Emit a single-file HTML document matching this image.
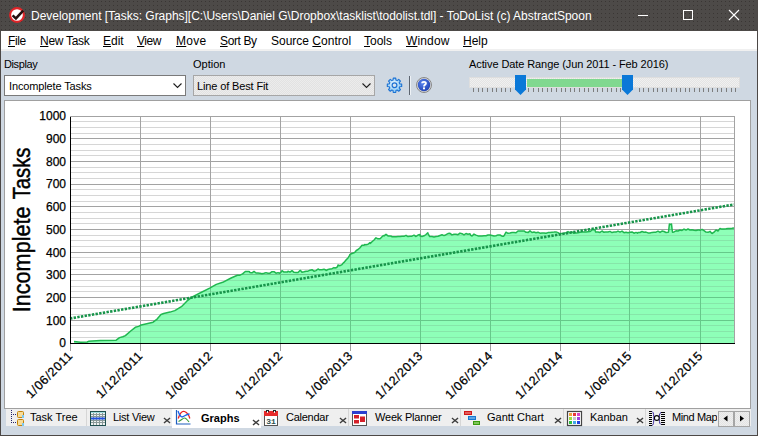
<!DOCTYPE html>
<html><head><meta charset="utf-8">
<style>
*{margin:0;padding:0;box-sizing:border-box}
html,body{width:758px;height:436px;overflow:hidden;background:#cfd8e2;font-family:"Liberation Sans",sans-serif;}
.abs{position:absolute}
#title{left:0;top:0;width:758px;height:31px;background-color:#4d4a48;background-image:radial-gradient(circle at 1.5px 1.5px,#3a3634 0.55px,transparent 0.85px);background-size:4px 4px}
#title .t{position:absolute;left:31px;top:9px;font-size:12px;color:#fff;white-space:nowrap;letter-spacing:-0.02px}
#menu{left:1px;top:31px;width:756px;height:20px;background:#fff;border-bottom:2px solid #f0f0f0}
#menu span{position:absolute;top:3px;font-size:12px;color:#000;white-space:nowrap}
#menu u{text-decoration:underline;text-underline-offset:1px}
.lbl{position:absolute;font-size:11px;color:#000;white-space:nowrap}
.combo{position:absolute;height:21px;border:1px solid #7a7a7a;background:#fff}
.combo .ct{position:absolute;left:3px;top:3px;font-size:11px;white-space:nowrap}
#panel{left:4px;top:100px;width:747px;height:309px;background:#fff;border:1px solid #a0a0a0}
.chart{position:absolute;left:0;top:0}
.mn{stroke:#d6d6d6;stroke-width:1}
.mj{stroke:#a3a3a3;stroke-width:1}
.ing .mn{stroke:#86e6a9}
.ing .mj{stroke:#66c98a}
.tk{stroke:#a0a0a0;stroke-width:1}
.yl text{font-family:"Liberation Sans",sans-serif;font-size:12px;fill:#000;stroke:#000;stroke-width:0.25px}
.dl text{font-family:"Liberation Sans",sans-serif;font-size:12.5px;letter-spacing:0.6px;stroke:#000;stroke-width:0.25px;fill:#000}
.ytitle{font-family:"Liberation Sans",sans-serif;font-size:23px;fill:#000;stroke:#000;stroke-width:0.45px}
#tabs{left:5px;top:409px;width:746px;height:18px}
.tab{position:absolute;top:0;height:18px;background:#ececec}
.tab .tt{position:absolute;top:3px;font-size:12px;white-space:nowrap;color:#000}
.x{position:absolute;font-size:11px}
.tt{position:absolute;top:411px;font-size:11px;white-space:nowrap;color:#000}
.sep{top:409px;width:1px;height:17px;background:#d6d6d6}
.sbtn{top:411px;width:16px;height:16px;background:repeating-conic-gradient(#e4e4e4 0 25%,#eeeeee 0 50%) 0 0/2px 2px;border:1px solid #a6a6a6}
#bl{left:0;top:0;width:1px;height:436px;background:#4c4846}
#br{left:757px;top:0;width:1px;height:436px;background:#4c4846}
#bb{left:0;top:435px;width:758px;height:1px;background:#4c4846}
</style></head><body>
<div id="title" class="abs">
  <svg class="abs" style="left:9px;top:7px" width="16" height="16" viewBox="0 0 16 16">
    <circle cx="8" cy="8" r="6.9" fill="#fff" stroke="#e02428" stroke-width="2.1"/>
    <path d="M3.6 8.4 L6.9 11.4 L14.2 3.6" fill="none" stroke="#231010" stroke-width="2.5"/>
  </svg>
  <div class="t">Development [Tasks: Graphs][C:\Users\Daniel G\Dropbox\tasklist\todolist.tdl] - ToDoList (c) AbstractSpoon</div>
  <svg class="abs" style="left:630px;top:0" width="128" height="31" viewBox="0 0 128 31">
    <line x1="8" y1="15.5" x2="18" y2="15.5" stroke="#fff" stroke-width="1"/>
    <rect x="53.5" y="10.5" width="9" height="9" fill="none" stroke="#fff" stroke-width="1"/>
    <path d="M99 10 L109 20 M109 10 L99 20" stroke="#fff" stroke-width="1.1"/>
  </svg>
</div>
<div id="menu" class="abs">
  <span style="left:7px;letter-spacing:-0.4px"><u>F</u>ile</span>
  <span style="left:39px;letter-spacing:-0.28px"><u>N</u>ew Task</span>
  <span style="left:102px"><u>E</u>dit</span>
  <span style="left:136px;letter-spacing:-0.45px"><u>V</u>iew</span>
  <span style="left:175px;letter-spacing:0.3px"><u>M</u>ove</span>
  <span style="left:219px;letter-spacing:-0.38px"><u>S</u>ort By</span>
  <span style="left:270px">Source <u>C</u>ontrol</span>
  <span style="left:363px"><u>T</u>ools</span>
  <span style="left:405px;letter-spacing:0.15px"><u>W</u>indow</span>
  <span style="left:462px"><u>H</u>elp</span>
</div>
<div class="lbl" style="left:4px;top:58px;letter-spacing:-0.4px">Display</div>
<div class="lbl" style="left:193px;top:58px">Option</div>
<div class="lbl" style="left:469px;top:58px;letter-spacing:-0.09px">Active Date Range (Jun 2011 - Feb 2016)</div>
<div class="combo" style="left:4px;top:75px;width:182px"><div class="ct" style="left:4px;top:4px;letter-spacing:-0.13px">Incomplete Tasks</div>
  <svg class="abs" style="left:168px;top:7px" width="10" height="6"><path d="M0.5 0.5 L4.5 4.5 L8.5 0.5" fill="none" stroke="#1e1e1e" stroke-width="1.1"/></svg></div>
<div class="combo" style="left:193px;top:75px;width:182px;background:repeating-conic-gradient(#e2e2e2 0 25%,#ececec 0 50%) 0 0/2px 2px;border-color:#a6a6a6"><div class="ct" style="top:4px;letter-spacing:-0.13px">Line of Best Fit</div>
  <svg class="abs" style="left:168px;top:7px" width="10" height="6"><path d="M0.5 0.5 L4.5 4.5 L8.5 0.5" fill="none" stroke="#1e1e1e" stroke-width="1.1"/></svg></div>
<!-- gear -->
<svg class="abs" style="left:384px;top:75px" width="21" height="21" viewBox="0 0 21 21">
  <defs><radialGradient id="gg" cx="0.45" cy="0.4" r="0.6"><stop offset="0" stop-color="#f4fbff"/><stop offset="1" stop-color="#7cc4f4"/></radialGradient></defs>
  <path d="M9.06 5.10 L9.26 3.11 L11.74 3.11 L11.94 5.10 L13.16 5.60 L14.71 4.34 L16.46 6.09 L15.20 7.64 L15.70 8.86 L17.69 9.06 L17.69 11.54 L15.70 11.74 L15.20 12.96 L16.46 14.51 L14.71 16.26 L13.16 15.00 L11.94 15.50 L11.74 17.49 L9.26 17.49 L9.06 15.50 L7.84 15.00 L6.29 16.26 L4.54 14.51 L5.80 12.96 L5.30 11.74 L3.31 11.54 L3.31 9.06 L5.30 8.86 L5.80 7.64 L4.54 6.09 L6.29 4.34 L7.84 5.60Z" fill="url(#gg)" stroke="#1c72d4" stroke-width="1.1" stroke-linejoin="round"/>
  <circle cx="10.5" cy="10.3" r="2.4" fill="#d8e4ee" stroke="#1c72d4" stroke-width="1.2"/>
</svg>
<div class="abs" style="left:409px;top:76px;width:1px;height:19px;background:#5d6570"></div><div class="abs" style="left:410px;top:76px;width:1px;height:19px;background:#eef2f6"></div>
<!-- help -->
<svg class="abs" style="left:416px;top:77px" width="16" height="16" viewBox="0 0 16 16">
  <circle cx="8" cy="8" r="7.5" fill="#d8d8d8" stroke="#888" stroke-width="1"/>
  <defs><radialGradient id="hg" cx="0.4" cy="0.35" r="0.7"><stop offset="0" stop-color="#5a86f0"/><stop offset="1" stop-color="#1e3fb0"/></radialGradient></defs><circle cx="8" cy="8" r="6.2" fill="url(#hg)"/>
  <path d="M6.2 6.3 C6.2 4.4 9.9 4.3 9.9 6.3 C9.9 7.9 8 7.8 8 9.6" fill="none" stroke="#fff" stroke-width="1.9"/><rect x="7" y="10.4" width="2" height="1.9" fill="#fff"/>
</svg>
<!-- slider -->
<div class="abs" style="left:469px;top:77px;width:271px;height:11px;background:repeating-conic-gradient(#e4e4e4 0 25%,#f0f0f0 0 50%) 0 0/2px 2px;border:1px solid #dedede"></div>
<div class="abs" style="left:527px;top:79px;width:95px;height:8px;background:#80d890"></div>
<div class="abs" style="left:473px;top:88px;width:1px;height:4px;background:#7d7d7d"></div><div class="abs" style="left:478px;top:88px;width:1px;height:4px;background:#7d7d7d"></div><div class="abs" style="left:482px;top:88px;width:1px;height:4px;background:#7d7d7d"></div><div class="abs" style="left:487px;top:88px;width:1px;height:4px;background:#7d7d7d"></div><div class="abs" style="left:492px;top:88px;width:1px;height:4px;background:#7d7d7d"></div><div class="abs" style="left:496px;top:88px;width:1px;height:4px;background:#7d7d7d"></div><div class="abs" style="left:501px;top:88px;width:1px;height:4px;background:#7d7d7d"></div><div class="abs" style="left:505px;top:88px;width:1px;height:4px;background:#7d7d7d"></div><div class="abs" style="left:510px;top:88px;width:1px;height:4px;background:#7d7d7d"></div><div class="abs" style="left:528px;top:88px;width:1px;height:4px;background:#7d7d7d"></div><div class="abs" style="left:533px;top:88px;width:1px;height:4px;background:#7d7d7d"></div><div class="abs" style="left:538px;top:88px;width:1px;height:4px;background:#7d7d7d"></div><div class="abs" style="left:542px;top:88px;width:1px;height:4px;background:#7d7d7d"></div><div class="abs" style="left:547px;top:88px;width:1px;height:4px;background:#7d7d7d"></div><div class="abs" style="left:551px;top:88px;width:1px;height:4px;background:#7d7d7d"></div><div class="abs" style="left:556px;top:88px;width:1px;height:4px;background:#7d7d7d"></div><div class="abs" style="left:561px;top:88px;width:1px;height:4px;background:#7d7d7d"></div><div class="abs" style="left:565px;top:88px;width:1px;height:4px;background:#7d7d7d"></div><div class="abs" style="left:570px;top:88px;width:1px;height:4px;background:#7d7d7d"></div><div class="abs" style="left:574px;top:88px;width:1px;height:4px;background:#7d7d7d"></div><div class="abs" style="left:579px;top:88px;width:1px;height:4px;background:#7d7d7d"></div><div class="abs" style="left:584px;top:88px;width:1px;height:4px;background:#7d7d7d"></div><div class="abs" style="left:588px;top:88px;width:1px;height:4px;background:#7d7d7d"></div><div class="abs" style="left:593px;top:88px;width:1px;height:4px;background:#7d7d7d"></div><div class="abs" style="left:597px;top:88px;width:1px;height:4px;background:#7d7d7d"></div><div class="abs" style="left:602px;top:88px;width:1px;height:4px;background:#7d7d7d"></div><div class="abs" style="left:607px;top:88px;width:1px;height:4px;background:#7d7d7d"></div><div class="abs" style="left:611px;top:88px;width:1px;height:4px;background:#7d7d7d"></div><div class="abs" style="left:616px;top:88px;width:1px;height:4px;background:#7d7d7d"></div><div class="abs" style="left:620px;top:88px;width:1px;height:4px;background:#7d7d7d"></div><div class="abs" style="left:639px;top:88px;width:1px;height:4px;background:#7d7d7d"></div><div class="abs" style="left:643px;top:88px;width:1px;height:4px;background:#7d7d7d"></div><div class="abs" style="left:648px;top:88px;width:1px;height:4px;background:#7d7d7d"></div><div class="abs" style="left:653px;top:88px;width:1px;height:4px;background:#7d7d7d"></div><div class="abs" style="left:657px;top:88px;width:1px;height:4px;background:#7d7d7d"></div><div class="abs" style="left:662px;top:88px;width:1px;height:4px;background:#7d7d7d"></div><div class="abs" style="left:666px;top:88px;width:1px;height:4px;background:#7d7d7d"></div><div class="abs" style="left:671px;top:88px;width:1px;height:4px;background:#7d7d7d"></div><div class="abs" style="left:676px;top:88px;width:1px;height:4px;background:#7d7d7d"></div><div class="abs" style="left:680px;top:88px;width:1px;height:4px;background:#7d7d7d"></div><div class="abs" style="left:685px;top:88px;width:1px;height:4px;background:#7d7d7d"></div><div class="abs" style="left:689px;top:88px;width:1px;height:4px;background:#7d7d7d"></div><div class="abs" style="left:694px;top:88px;width:1px;height:4px;background:#7d7d7d"></div><div class="abs" style="left:699px;top:88px;width:1px;height:4px;background:#7d7d7d"></div><div class="abs" style="left:703px;top:88px;width:1px;height:4px;background:#7d7d7d"></div><div class="abs" style="left:708px;top:88px;width:1px;height:4px;background:#7d7d7d"></div><div class="abs" style="left:712px;top:88px;width:1px;height:4px;background:#7d7d7d"></div><div class="abs" style="left:717px;top:88px;width:1px;height:4px;background:#7d7d7d"></div><div class="abs" style="left:721px;top:88px;width:1px;height:4px;background:#7d7d7d"></div><div class="abs" style="left:726px;top:88px;width:1px;height:4px;background:#7d7d7d"></div><div class="abs" style="left:731px;top:88px;width:1px;height:4px;background:#7d7d7d"></div><div class="abs" style="left:735px;top:88px;width:1px;height:4px;background:#7d7d7d"></div>
<svg class="abs" style="left:469px;top:74px" width="275" height="22">
  <path d="M46 1h11v14.5l-5.5 5.5L46 15.5z" fill="#0a78d8"/>
  <path d="M153 1h11v14.5l-5.5 5.5L153 15.5z" fill="#0a78d8"/>
</svg>
<div id="panel" class="abs"></div>
<svg class="chart" width="758" height="436" viewBox="0 0 758 436">
<g shape-rendering="crispEdges">
<line x1="71" y1="337.5" x2="734" y2="337.5" class="mn"/>
<line x1="71" y1="331.5" x2="734" y2="331.5" class="mn"/>
<line x1="71" y1="325.5" x2="734" y2="325.5" class="mn"/>
<line x1="71" y1="314.5" x2="734" y2="314.5" class="mn"/>
<line x1="71" y1="308.5" x2="734" y2="308.5" class="mn"/>
<line x1="71" y1="303.5" x2="734" y2="303.5" class="mn"/>
<line x1="71" y1="291.5" x2="734" y2="291.5" class="mn"/>
<line x1="71" y1="286.5" x2="734" y2="286.5" class="mn"/>
<line x1="71" y1="280.5" x2="734" y2="280.5" class="mn"/>
<line x1="71" y1="269.5" x2="734" y2="269.5" class="mn"/>
<line x1="71" y1="263.5" x2="734" y2="263.5" class="mn"/>
<line x1="71" y1="257.5" x2="734" y2="257.5" class="mn"/>
<line x1="71" y1="246.5" x2="734" y2="246.5" class="mn"/>
<line x1="71" y1="240.5" x2="734" y2="240.5" class="mn"/>
<line x1="71" y1="235.5" x2="734" y2="235.5" class="mn"/>
<line x1="71" y1="223.5" x2="734" y2="223.5" class="mn"/>
<line x1="71" y1="218.5" x2="734" y2="218.5" class="mn"/>
<line x1="71" y1="212.5" x2="734" y2="212.5" class="mn"/>
<line x1="71" y1="201.5" x2="734" y2="201.5" class="mn"/>
<line x1="71" y1="195.5" x2="734" y2="195.5" class="mn"/>
<line x1="71" y1="189.5" x2="734" y2="189.5" class="mn"/>
<line x1="71" y1="178.5" x2="734" y2="178.5" class="mn"/>
<line x1="71" y1="172.5" x2="734" y2="172.5" class="mn"/>
<line x1="71" y1="167.5" x2="734" y2="167.5" class="mn"/>
<line x1="71" y1="155.5" x2="734" y2="155.5" class="mn"/>
<line x1="71" y1="150.5" x2="734" y2="150.5" class="mn"/>
<line x1="71" y1="144.5" x2="734" y2="144.5" class="mn"/>
<line x1="71" y1="133.5" x2="734" y2="133.5" class="mn"/>
<line x1="71" y1="127.5" x2="734" y2="127.5" class="mn"/>
<line x1="71" y1="121.5" x2="734" y2="121.5" class="mn"/>
<line x1="71" y1="320.5" x2="734" y2="320.5" class="mj"/>
<line x1="71" y1="297.5" x2="734" y2="297.5" class="mj"/>
<line x1="71" y1="274.5" x2="734" y2="274.5" class="mj"/>
<line x1="71" y1="252.5" x2="734" y2="252.5" class="mj"/>
<line x1="71" y1="229.5" x2="734" y2="229.5" class="mj"/>
<line x1="71" y1="206.5" x2="734" y2="206.5" class="mj"/>
<line x1="71" y1="184.5" x2="734" y2="184.5" class="mj"/>
<line x1="71" y1="161.5" x2="734" y2="161.5" class="mj"/>
<line x1="71" y1="138.5" x2="734" y2="138.5" class="mj"/>
<line x1="140.5" y1="116" x2="140.5" y2="343" class="mj"/>
<line x1="210.5" y1="116" x2="210.5" y2="343" class="mj"/>
<line x1="280.5" y1="116" x2="280.5" y2="343" class="mj"/>
<line x1="350.5" y1="116" x2="350.5" y2="343" class="mj"/>
<line x1="420.5" y1="116" x2="420.5" y2="343" class="mj"/>
<line x1="490.5" y1="116" x2="490.5" y2="343" class="mj"/>
<line x1="560.5" y1="116" x2="560.5" y2="343" class="mj"/>
<line x1="629.5" y1="116" x2="629.5" y2="343" class="mj"/>
<line x1="700.5" y1="116" x2="700.5" y2="343" class="mj"/>
<line x1="70" y1="116.5" x2="735" y2="116.5" class="mj"/>
<line x1="734.5" y1="116" x2="734.5" y2="343" class="mj"/>
</g>
<defs><clipPath id="cp"><polygon points="74.0,341.6 80.6,342.2 87.2,342.0 88.5,341.3 100.3,340.6 116.2,340.2 119.5,337.6 122.8,336.7 125.4,335.6 130.7,331.0 135.3,327.3 138.6,326.4 141.2,325.0 147.8,323.5 153.1,322.2 157.1,319.1 161.0,314.5 163.7,313.5 170.0,312.1 174.8,310.6 181.4,306.7 186.8,301.2 192.3,296.9 201.0,292.5 209.7,288.2 216.3,284.4 222.7,282.3 231.1,278.0 237.4,275.3 240.0,275.2 242.6,273.9 245.3,271.5 249.2,271.5 250.0,272.5 251.2,272.8 252.0,272.8 254.0,271.4 256.0,273.0 258.0,273.1 259.8,273.2 260.0,273.2 262.0,273.7 264.0,273.2 266.0,272.6 268.0,273.2 270.0,273.2 272.0,271.7 274.0,271.7 276.0,273.2 278.0,272.6 279.6,273.2 280.0,272.9 280.9,272.3 282.0,270.7 284.0,272.1 286.0,272.0 287.5,271.9 288.0,271.3 290.0,272.1 292.0,270.7 294.0,272.3 296.0,272.5 298.0,272.6 300.0,270.5 300.7,270.6 302.0,272.3 304.0,271.8 306.0,271.2 308.0,271.2 310.0,270.2 312.0,269.7 313.9,271.2 314.0,271.2 316.0,270.6 318.0,269.0 319.2,269.7 320.0,269.7 322.0,269.8 324.0,269.3 325.8,270.0 326.0,270.5 328.0,269.5 330.0,269.1 332.0,268.7 334.0,267.6 335.0,268.0 336.0,267.8 337.6,266.6 338.0,265.0 340.0,265.7 342.0,264.6 343.0,263.3 344.0,262.4 346.0,260.1 348.0,257.9 349.3,255.9 350.0,254.4 352.0,253.5 354.0,252.8 355.6,251.7 356.0,250.7 358.0,249.5 360.0,247.7 362.0,245.3 364.0,245.3 364.7,244.5 366.0,244.7 368.0,244.2 370.0,242.5 370.3,243.4 372.0,241.8 374.0,240.0 374.2,239.8 376.0,237.8 378.0,238.8 380.0,238.8 380.6,238.2 382.0,236.8 383.4,235.5 384.0,235.9 386.0,234.3 388.0,235.9 390.0,236.1 391.7,236.3 392.0,236.8 394.0,236.8 396.0,236.8 398.0,236.6 400.0,236.6 402.0,236.3 404.0,236.3 406.0,235.3 407.5,236.3 408.0,236.6 410.0,236.3 412.0,236.2 414.0,235.2 416.0,236.5 418.0,235.1 420.0,234.6 420.2,236.1 422.0,236.5 424.0,235.8 424.1,235.8 426.0,234.5 427.8,232.7 428.0,233.6 429.7,236.6 430.0,236.6 432.0,236.6 434.0,236.9 436.0,236.6 438.0,236.3 440.0,235.5 442.0,234.8 444.0,235.6 446.0,234.7 448.0,233.6 450.0,233.3 452.0,234.9 454.0,234.3 455.0,234.2 456.0,234.3 458.0,234.7 460.0,233.1 462.0,233.7 464.0,234.9 466.0,233.5 468.0,234.2 470.0,233.8 470.8,235.4 472.0,236.0 474.0,234.1 476.0,235.1 478.0,235.9 480.0,236.0 482.0,235.9 484.0,235.8 486.0,235.7 488.0,235.0 490.0,234.9 491.9,235.4 492.0,235.4 494.0,235.9 496.0,235.7 498.0,234.9 500.0,235.0 502.0,236.2 503.5,236.3 504.0,235.8 506.0,232.2 506.9,232.7 508.0,233.2 510.0,233.1 512.0,232.6 514.0,232.6 516.0,232.8 518.0,231.0 520.0,230.9 522.0,230.9 524.0,230.9 526.0,232.3 527.5,232.3 528.0,232.6 530.0,230.9 532.0,232.5 534.0,232.0 536.0,232.7 538.0,232.2 540.0,233.2 542.0,232.9 543.3,233.0 544.0,232.9 546.0,233.3 548.0,232.6 550.0,232.4 552.0,232.2 554.0,232.1 556.0,231.9 558.0,232.6 560.0,233.8 560.7,233.5 562.0,233.4 564.0,233.3 566.0,232.6 568.0,231.6 570.0,233.0 572.0,231.9 574.0,233.3 575.0,232.7 576.0,233.1 578.0,232.7 580.0,232.2 582.0,232.0 584.0,232.1 586.0,231.9 588.0,231.7 590.0,231.5 590.8,231.1 592.0,229.6 594.0,229.8 594.8,229.5 595.6,231.9 596.0,231.9 598.0,231.9 600.0,232.4 602.0,231.0 604.0,232.3 605.0,232.0 606.0,232.0 608.0,232.0 610.0,231.4 612.0,232.6 614.0,232.1 616.0,232.1 618.0,231.1 620.0,232.1 622.0,231.1 624.0,232.7 626.0,232.2 628.0,232.7 630.0,232.2 632.0,231.9 634.0,233.2 636.0,232.4 637.5,233.2 638.0,232.6 640.0,232.5 642.0,231.5 644.0,232.2 646.0,232.1 648.0,232.9 650.0,233.0 652.0,232.4 654.0,232.3 656.0,232.2 658.0,231.2 660.0,232.4 662.0,231.1 664.0,231.5 666.0,232.5 668.0,232.3 668.5,232.0 669.4,224.0 670.0,224.5 671.5,224.0 672.0,228.6 672.5,232.2 674.0,231.9 676.0,230.8 678.0,231.0 680.0,230.0 682.0,230.4 684.0,229.1 684.8,229.5 686.0,230.1 688.0,229.0 690.0,230.0 692.0,229.8 694.0,230.2 696.0,230.5 698.0,230.0 699.2,230.1 700.0,230.3 702.0,229.3 704.0,230.7 706.0,232.1 708.0,232.3 710.0,231.3 711.6,233.2 712.0,233.5 714.0,232.2 716.0,229.9 718.0,231.0 720.0,228.4 721.9,229.1 722.0,229.1 724.0,228.9 726.0,228.8 728.0,228.6 730.0,228.4 732.0,228.3 734.0,228.1 734,343 74,343"/></clipPath></defs>
<polygon points="74.0,341.6 80.6,342.2 87.2,342.0 88.5,341.3 100.3,340.6 116.2,340.2 119.5,337.6 122.8,336.7 125.4,335.6 130.7,331.0 135.3,327.3 138.6,326.4 141.2,325.0 147.8,323.5 153.1,322.2 157.1,319.1 161.0,314.5 163.7,313.5 170.0,312.1 174.8,310.6 181.4,306.7 186.8,301.2 192.3,296.9 201.0,292.5 209.7,288.2 216.3,284.4 222.7,282.3 231.1,278.0 237.4,275.3 240.0,275.2 242.6,273.9 245.3,271.5 249.2,271.5 250.0,272.5 251.2,272.8 252.0,272.8 254.0,271.4 256.0,273.0 258.0,273.1 259.8,273.2 260.0,273.2 262.0,273.7 264.0,273.2 266.0,272.6 268.0,273.2 270.0,273.2 272.0,271.7 274.0,271.7 276.0,273.2 278.0,272.6 279.6,273.2 280.0,272.9 280.9,272.3 282.0,270.7 284.0,272.1 286.0,272.0 287.5,271.9 288.0,271.3 290.0,272.1 292.0,270.7 294.0,272.3 296.0,272.5 298.0,272.6 300.0,270.5 300.7,270.6 302.0,272.3 304.0,271.8 306.0,271.2 308.0,271.2 310.0,270.2 312.0,269.7 313.9,271.2 314.0,271.2 316.0,270.6 318.0,269.0 319.2,269.7 320.0,269.7 322.0,269.8 324.0,269.3 325.8,270.0 326.0,270.5 328.0,269.5 330.0,269.1 332.0,268.7 334.0,267.6 335.0,268.0 336.0,267.8 337.6,266.6 338.0,265.0 340.0,265.7 342.0,264.6 343.0,263.3 344.0,262.4 346.0,260.1 348.0,257.9 349.3,255.9 350.0,254.4 352.0,253.5 354.0,252.8 355.6,251.7 356.0,250.7 358.0,249.5 360.0,247.7 362.0,245.3 364.0,245.3 364.7,244.5 366.0,244.7 368.0,244.2 370.0,242.5 370.3,243.4 372.0,241.8 374.0,240.0 374.2,239.8 376.0,237.8 378.0,238.8 380.0,238.8 380.6,238.2 382.0,236.8 383.4,235.5 384.0,235.9 386.0,234.3 388.0,235.9 390.0,236.1 391.7,236.3 392.0,236.8 394.0,236.8 396.0,236.8 398.0,236.6 400.0,236.6 402.0,236.3 404.0,236.3 406.0,235.3 407.5,236.3 408.0,236.6 410.0,236.3 412.0,236.2 414.0,235.2 416.0,236.5 418.0,235.1 420.0,234.6 420.2,236.1 422.0,236.5 424.0,235.8 424.1,235.8 426.0,234.5 427.8,232.7 428.0,233.6 429.7,236.6 430.0,236.6 432.0,236.6 434.0,236.9 436.0,236.6 438.0,236.3 440.0,235.5 442.0,234.8 444.0,235.6 446.0,234.7 448.0,233.6 450.0,233.3 452.0,234.9 454.0,234.3 455.0,234.2 456.0,234.3 458.0,234.7 460.0,233.1 462.0,233.7 464.0,234.9 466.0,233.5 468.0,234.2 470.0,233.8 470.8,235.4 472.0,236.0 474.0,234.1 476.0,235.1 478.0,235.9 480.0,236.0 482.0,235.9 484.0,235.8 486.0,235.7 488.0,235.0 490.0,234.9 491.9,235.4 492.0,235.4 494.0,235.9 496.0,235.7 498.0,234.9 500.0,235.0 502.0,236.2 503.5,236.3 504.0,235.8 506.0,232.2 506.9,232.7 508.0,233.2 510.0,233.1 512.0,232.6 514.0,232.6 516.0,232.8 518.0,231.0 520.0,230.9 522.0,230.9 524.0,230.9 526.0,232.3 527.5,232.3 528.0,232.6 530.0,230.9 532.0,232.5 534.0,232.0 536.0,232.7 538.0,232.2 540.0,233.2 542.0,232.9 543.3,233.0 544.0,232.9 546.0,233.3 548.0,232.6 550.0,232.4 552.0,232.2 554.0,232.1 556.0,231.9 558.0,232.6 560.0,233.8 560.7,233.5 562.0,233.4 564.0,233.3 566.0,232.6 568.0,231.6 570.0,233.0 572.0,231.9 574.0,233.3 575.0,232.7 576.0,233.1 578.0,232.7 580.0,232.2 582.0,232.0 584.0,232.1 586.0,231.9 588.0,231.7 590.0,231.5 590.8,231.1 592.0,229.6 594.0,229.8 594.8,229.5 595.6,231.9 596.0,231.9 598.0,231.9 600.0,232.4 602.0,231.0 604.0,232.3 605.0,232.0 606.0,232.0 608.0,232.0 610.0,231.4 612.0,232.6 614.0,232.1 616.0,232.1 618.0,231.1 620.0,232.1 622.0,231.1 624.0,232.7 626.0,232.2 628.0,232.7 630.0,232.2 632.0,231.9 634.0,233.2 636.0,232.4 637.5,233.2 638.0,232.6 640.0,232.5 642.0,231.5 644.0,232.2 646.0,232.1 648.0,232.9 650.0,233.0 652.0,232.4 654.0,232.3 656.0,232.2 658.0,231.2 660.0,232.4 662.0,231.1 664.0,231.5 666.0,232.5 668.0,232.3 668.5,232.0 669.4,224.0 670.0,224.5 671.5,224.0 672.0,228.6 672.5,232.2 674.0,231.9 676.0,230.8 678.0,231.0 680.0,230.0 682.0,230.4 684.0,229.1 684.8,229.5 686.0,230.1 688.0,229.0 690.0,230.0 692.0,229.8 694.0,230.2 696.0,230.5 698.0,230.0 699.2,230.1 700.0,230.3 702.0,229.3 704.0,230.7 706.0,232.1 708.0,232.3 710.0,231.3 711.6,233.2 712.0,233.5 714.0,232.2 716.0,229.9 718.0,231.0 720.0,228.4 721.9,229.1 722.0,229.1 724.0,228.9 726.0,228.8 728.0,228.6 730.0,228.4 732.0,228.3 734.0,228.1 734,343 74,343" fill="#8effb8" stroke="none"/>
<g shape-rendering="crispEdges" clip-path="url(#cp)" class="ing">
<line x1="71" y1="337.5" x2="734" y2="337.5" class="mn"/>
<line x1="71" y1="331.5" x2="734" y2="331.5" class="mn"/>
<line x1="71" y1="325.5" x2="734" y2="325.5" class="mn"/>
<line x1="71" y1="314.5" x2="734" y2="314.5" class="mn"/>
<line x1="71" y1="308.5" x2="734" y2="308.5" class="mn"/>
<line x1="71" y1="303.5" x2="734" y2="303.5" class="mn"/>
<line x1="71" y1="291.5" x2="734" y2="291.5" class="mn"/>
<line x1="71" y1="286.5" x2="734" y2="286.5" class="mn"/>
<line x1="71" y1="280.5" x2="734" y2="280.5" class="mn"/>
<line x1="71" y1="269.5" x2="734" y2="269.5" class="mn"/>
<line x1="71" y1="263.5" x2="734" y2="263.5" class="mn"/>
<line x1="71" y1="257.5" x2="734" y2="257.5" class="mn"/>
<line x1="71" y1="246.5" x2="734" y2="246.5" class="mn"/>
<line x1="71" y1="240.5" x2="734" y2="240.5" class="mn"/>
<line x1="71" y1="235.5" x2="734" y2="235.5" class="mn"/>
<line x1="71" y1="223.5" x2="734" y2="223.5" class="mn"/>
<line x1="71" y1="218.5" x2="734" y2="218.5" class="mn"/>
<line x1="71" y1="212.5" x2="734" y2="212.5" class="mn"/>
<line x1="71" y1="201.5" x2="734" y2="201.5" class="mn"/>
<line x1="71" y1="195.5" x2="734" y2="195.5" class="mn"/>
<line x1="71" y1="189.5" x2="734" y2="189.5" class="mn"/>
<line x1="71" y1="178.5" x2="734" y2="178.5" class="mn"/>
<line x1="71" y1="172.5" x2="734" y2="172.5" class="mn"/>
<line x1="71" y1="167.5" x2="734" y2="167.5" class="mn"/>
<line x1="71" y1="155.5" x2="734" y2="155.5" class="mn"/>
<line x1="71" y1="150.5" x2="734" y2="150.5" class="mn"/>
<line x1="71" y1="144.5" x2="734" y2="144.5" class="mn"/>
<line x1="71" y1="133.5" x2="734" y2="133.5" class="mn"/>
<line x1="71" y1="127.5" x2="734" y2="127.5" class="mn"/>
<line x1="71" y1="121.5" x2="734" y2="121.5" class="mn"/>
<line x1="71" y1="320.5" x2="734" y2="320.5" class="mj"/>
<line x1="71" y1="297.5" x2="734" y2="297.5" class="mj"/>
<line x1="71" y1="274.5" x2="734" y2="274.5" class="mj"/>
<line x1="71" y1="252.5" x2="734" y2="252.5" class="mj"/>
<line x1="71" y1="229.5" x2="734" y2="229.5" class="mj"/>
<line x1="71" y1="206.5" x2="734" y2="206.5" class="mj"/>
<line x1="71" y1="184.5" x2="734" y2="184.5" class="mj"/>
<line x1="71" y1="161.5" x2="734" y2="161.5" class="mj"/>
<line x1="71" y1="138.5" x2="734" y2="138.5" class="mj"/>
<line x1="140.5" y1="116" x2="140.5" y2="343" class="mj"/>
<line x1="210.5" y1="116" x2="210.5" y2="343" class="mj"/>
<line x1="280.5" y1="116" x2="280.5" y2="343" class="mj"/>
<line x1="350.5" y1="116" x2="350.5" y2="343" class="mj"/>
<line x1="420.5" y1="116" x2="420.5" y2="343" class="mj"/>
<line x1="490.5" y1="116" x2="490.5" y2="343" class="mj"/>
<line x1="560.5" y1="116" x2="560.5" y2="343" class="mj"/>
<line x1="629.5" y1="116" x2="629.5" y2="343" class="mj"/>
<line x1="700.5" y1="116" x2="700.5" y2="343" class="mj"/>
<line x1="70" y1="116.5" x2="735" y2="116.5" class="mj"/>
<line x1="734.5" y1="116" x2="734.5" y2="343" class="mj"/>
</g>
<polyline points="74.0,341.6 80.6,342.2 87.2,342.0 88.5,341.3 100.3,340.6 116.2,340.2 119.5,337.6 122.8,336.7 125.4,335.6 130.7,331.0 135.3,327.3 138.6,326.4 141.2,325.0 147.8,323.5 153.1,322.2 157.1,319.1 161.0,314.5 163.7,313.5 170.0,312.1 174.8,310.6 181.4,306.7 186.8,301.2 192.3,296.9 201.0,292.5 209.7,288.2 216.3,284.4 222.7,282.3 231.1,278.0 237.4,275.3 240.0,275.2 242.6,273.9 245.3,271.5 249.2,271.5 250.0,272.5 251.2,272.8 252.0,272.8 254.0,271.4 256.0,273.0 258.0,273.1 259.8,273.2 260.0,273.2 262.0,273.7 264.0,273.2 266.0,272.6 268.0,273.2 270.0,273.2 272.0,271.7 274.0,271.7 276.0,273.2 278.0,272.6 279.6,273.2 280.0,272.9 280.9,272.3 282.0,270.7 284.0,272.1 286.0,272.0 287.5,271.9 288.0,271.3 290.0,272.1 292.0,270.7 294.0,272.3 296.0,272.5 298.0,272.6 300.0,270.5 300.7,270.6 302.0,272.3 304.0,271.8 306.0,271.2 308.0,271.2 310.0,270.2 312.0,269.7 313.9,271.2 314.0,271.2 316.0,270.6 318.0,269.0 319.2,269.7 320.0,269.7 322.0,269.8 324.0,269.3 325.8,270.0 326.0,270.5 328.0,269.5 330.0,269.1 332.0,268.7 334.0,267.6 335.0,268.0 336.0,267.8 337.6,266.6 338.0,265.0 340.0,265.7 342.0,264.6 343.0,263.3 344.0,262.4 346.0,260.1 348.0,257.9 349.3,255.9 350.0,254.4 352.0,253.5 354.0,252.8 355.6,251.7 356.0,250.7 358.0,249.5 360.0,247.7 362.0,245.3 364.0,245.3 364.7,244.5 366.0,244.7 368.0,244.2 370.0,242.5 370.3,243.4 372.0,241.8 374.0,240.0 374.2,239.8 376.0,237.8 378.0,238.8 380.0,238.8 380.6,238.2 382.0,236.8 383.4,235.5 384.0,235.9 386.0,234.3 388.0,235.9 390.0,236.1 391.7,236.3 392.0,236.8 394.0,236.8 396.0,236.8 398.0,236.6 400.0,236.6 402.0,236.3 404.0,236.3 406.0,235.3 407.5,236.3 408.0,236.6 410.0,236.3 412.0,236.2 414.0,235.2 416.0,236.5 418.0,235.1 420.0,234.6 420.2,236.1 422.0,236.5 424.0,235.8 424.1,235.8 426.0,234.5 427.8,232.7 428.0,233.6 429.7,236.6 430.0,236.6 432.0,236.6 434.0,236.9 436.0,236.6 438.0,236.3 440.0,235.5 442.0,234.8 444.0,235.6 446.0,234.7 448.0,233.6 450.0,233.3 452.0,234.9 454.0,234.3 455.0,234.2 456.0,234.3 458.0,234.7 460.0,233.1 462.0,233.7 464.0,234.9 466.0,233.5 468.0,234.2 470.0,233.8 470.8,235.4 472.0,236.0 474.0,234.1 476.0,235.1 478.0,235.9 480.0,236.0 482.0,235.9 484.0,235.8 486.0,235.7 488.0,235.0 490.0,234.9 491.9,235.4 492.0,235.4 494.0,235.9 496.0,235.7 498.0,234.9 500.0,235.0 502.0,236.2 503.5,236.3 504.0,235.8 506.0,232.2 506.9,232.7 508.0,233.2 510.0,233.1 512.0,232.6 514.0,232.6 516.0,232.8 518.0,231.0 520.0,230.9 522.0,230.9 524.0,230.9 526.0,232.3 527.5,232.3 528.0,232.6 530.0,230.9 532.0,232.5 534.0,232.0 536.0,232.7 538.0,232.2 540.0,233.2 542.0,232.9 543.3,233.0 544.0,232.9 546.0,233.3 548.0,232.6 550.0,232.4 552.0,232.2 554.0,232.1 556.0,231.9 558.0,232.6 560.0,233.8 560.7,233.5 562.0,233.4 564.0,233.3 566.0,232.6 568.0,231.6 570.0,233.0 572.0,231.9 574.0,233.3 575.0,232.7 576.0,233.1 578.0,232.7 580.0,232.2 582.0,232.0 584.0,232.1 586.0,231.9 588.0,231.7 590.0,231.5 590.8,231.1 592.0,229.6 594.0,229.8 594.8,229.5 595.6,231.9 596.0,231.9 598.0,231.9 600.0,232.4 602.0,231.0 604.0,232.3 605.0,232.0 606.0,232.0 608.0,232.0 610.0,231.4 612.0,232.6 614.0,232.1 616.0,232.1 618.0,231.1 620.0,232.1 622.0,231.1 624.0,232.7 626.0,232.2 628.0,232.7 630.0,232.2 632.0,231.9 634.0,233.2 636.0,232.4 637.5,233.2 638.0,232.6 640.0,232.5 642.0,231.5 644.0,232.2 646.0,232.1 648.0,232.9 650.0,233.0 652.0,232.4 654.0,232.3 656.0,232.2 658.0,231.2 660.0,232.4 662.0,231.1 664.0,231.5 666.0,232.5 668.0,232.3 668.5,232.0 669.4,224.0 670.0,224.5 671.5,224.0 672.0,228.6 672.5,232.2 674.0,231.9 676.0,230.8 678.0,231.0 680.0,230.0 682.0,230.4 684.0,229.1 684.8,229.5 686.0,230.1 688.0,229.0 690.0,230.0 692.0,229.8 694.0,230.2 696.0,230.5 698.0,230.0 699.2,230.1 700.0,230.3 702.0,229.3 704.0,230.7 706.0,232.1 708.0,232.3 710.0,231.3 711.6,233.2 712.0,233.5 714.0,232.2 716.0,229.9 718.0,231.0 720.0,228.4 721.9,229.1 722.0,229.1 724.0,228.9 726.0,228.8 728.0,228.6 730.0,228.4 732.0,228.3 734.0,228.1" fill="none" stroke="#20b850" stroke-width="1.5" stroke-linejoin="round"/>
<line x1="70" y1="318.5" x2="734" y2="204.5" stroke="#17944a" stroke-width="2.6" stroke-dasharray="2.4 1.3"/>
<g shape-rendering="crispEdges">
<line x1="70.5" y1="117" x2="70.5" y2="344" stroke="#000"/>
<line x1="70" y1="343.5" x2="735" y2="343.5" stroke="#000"/>
<line x1="70.5" y1="344" x2="70.5" y2="351" class="tk"/>
<line x1="140.5" y1="344" x2="140.5" y2="351" class="tk"/>
<line x1="210.5" y1="344" x2="210.5" y2="351" class="tk"/>
<line x1="280.5" y1="344" x2="280.5" y2="351" class="tk"/>
<line x1="350.5" y1="344" x2="350.5" y2="351" class="tk"/>
<line x1="420.5" y1="344" x2="420.5" y2="351" class="tk"/>
<line x1="490.5" y1="344" x2="490.5" y2="351" class="tk"/>
<line x1="560.5" y1="344" x2="560.5" y2="351" class="tk"/>
<line x1="629.5" y1="344" x2="629.5" y2="351" class="tk"/>
<line x1="700.5" y1="344" x2="700.5" y2="351" class="tk"/>
</g>
<g class="yl">
<text x="66" y="347.3" text-anchor="end">0</text>
<text x="66" y="324.6" text-anchor="end">100</text>
<text x="66" y="301.9" text-anchor="end">200</text>
<text x="66" y="279.2" text-anchor="end">300</text>
<text x="66" y="256.5" text-anchor="end">400</text>
<text x="66" y="233.8" text-anchor="end">500</text>
<text x="66" y="211.1" text-anchor="end">600</text>
<text x="66" y="188.4" text-anchor="end">700</text>
<text x="66" y="165.7" text-anchor="end">800</text>
<text x="66" y="143.0" text-anchor="end">900</text>
<text x="66" y="120.3" text-anchor="end">1000</text>
</g>
<g class="dl">
<text transform="translate(73.5,356.5) rotate(-45)" text-anchor="end">1/06/2011</text>
<text transform="translate(143.5,356.5) rotate(-45)" text-anchor="end">1/12/2011</text>
<text transform="translate(213.5,356.5) rotate(-45)" text-anchor="end">1/06/2012</text>
<text transform="translate(283.5,356.5) rotate(-45)" text-anchor="end">1/12/2012</text>
<text transform="translate(353.5,356.5) rotate(-45)" text-anchor="end">1/06/2013</text>
<text transform="translate(423.5,356.5) rotate(-45)" text-anchor="end">1/12/2013</text>
<text transform="translate(493.5,356.5) rotate(-45)" text-anchor="end">1/06/2014</text>
<text transform="translate(563.5,356.5) rotate(-45)" text-anchor="end">1/12/2014</text>
<text transform="translate(632.5,356.5) rotate(-45)" text-anchor="end">1/06/2015</text>
<text transform="translate(703.5,356.5) rotate(-45)" text-anchor="end">1/12/2015</text>
</g>
<text class="ytitle" transform="translate(29.5,312.3) rotate(-90) scale(0.941,1)">Incomplete</text>
<text class="ytitle" transform="translate(29.5,199.3) rotate(-90) scale(0.88,1)">Tasks</text>
</svg>
<div class="abs" style="left:6px;top:409px;width:745px;height:17px;background:#efefef"></div>
<div class="abs sep" style="left:86px"></div>
<div class="abs sep" style="left:348px"></div>
<div class="abs sep" style="left:460px"></div>
<div class="abs sep" style="left:563px"></div>
<div class="abs sep" style="left:645px"></div>
<div class="abs" style="left:172px;top:409px;width:89px;height:19px;background:#fff"></div>
<!-- task tree icon -->
<svg class="abs" style="left:8px;top:408px" width="20" height="20" viewBox="0 0 20 20">
 <g fill="#24246a">
  <rect x="3" y="2" width="1" height="1"/><rect x="3" y="4" width="1" height="1"/><rect x="3" y="6" width="1" height="1"/><rect x="5" y="6" width="1" height="1"/><rect x="7" y="6" width="1" height="1"/>
  <rect x="3" y="8" width="1" height="1"/><rect x="3" y="10" width="1" height="1"/><rect x="3" y="12" width="1" height="1"/><rect x="3" y="14" width="1" height="1"/><rect x="5" y="14" width="1" height="1"/><rect x="7" y="14" width="1" height="1"/>
 </g>
 <rect x="9.5" y="3.5" width="6" height="6" rx="1" fill="#f6dc9a" stroke="#c2820a"/>
 <rect x="9.5" y="11.5" width="6" height="6" rx="1" fill="#f6dc9a" stroke="#c2820a"/>
 <rect x="14" y="7" width="2" height="3" fill="#7cc8f0"/><rect x="14" y="15" width="2" height="3" fill="#7cc8f0"/>
</svg>
<!-- list view icon -->
<svg class="abs" style="left:88px;top:408px" width="20" height="20" viewBox="0 0 20 20">
 <rect x="2.5" y="3.5" width="15" height="14" fill="#eef2f2" stroke="#1f4f4f"/>
 <g stroke="#8a9a9a" stroke-width="1"><path d="M3 6.5h14M3 8.5h14M3 12.5h14M3 14.5h14M5.5 4v13M8.5 4v13M11.5 4v13M14.5 4v13"/></g>
 <rect x="3" y="9.5" width="14" height="2" fill="#2050e0"/>
 <rect x="3" y="4" width="14" height="1" fill="#9fdcdc"/>
</svg>
<!-- graphs icon -->
<svg class="abs" style="left:174px;top:407px" width="20" height="20" viewBox="0 0 20 20">
 <path d="M2.5 3v14h14" fill="none" stroke="#1e5fc0" stroke-width="1.2"/>
 <path d="M4.2 11.5 C6 6 8 3.5 10.5 4.5 C13 5.5 15 8 15.8 11.5" fill="none" stroke="#ee2222" stroke-width="1.3"/>
 <path d="M4 4 C5 7 6.5 9.5 8 10 C10 10 12 7 15.5 7" fill="none" stroke="#1f62e8" stroke-width="1.3"/>
 <path d="M4.5 14.5 C7 13.5 9 11 10.5 11 C12 11 13.5 13 15 15" fill="none" stroke="#3a9a3a" stroke-width="1.2"/>
</svg>
<!-- calendar icon -->
<svg class="abs" style="left:261px;top:407px" width="20" height="20" viewBox="0 0 20 20">
 <rect x="3.5" y="8.5" width="13" height="10" fill="#fff" stroke="#555"/>
 <rect x="3" y="4" width="14" height="5" fill="#e52b2b"/>
 <rect x="5" y="3" width="3" height="2" fill="#222"/><rect x="12" y="3" width="3" height="2" fill="#222"/>
 <rect x="6" y="4" width="1" height="2" fill="#eee"/><rect x="13" y="4" width="1" height="2" fill="#eee"/>
 <text x="10" y="17" text-anchor="middle" font-family="Liberation Mono" font-size="8" font-weight="bold" fill="#2c5050">31</text>
</svg>
<!-- week planner icon -->
<svg class="abs" style="left:349px;top:407px" width="20" height="20" viewBox="0 0 20 20">
 <rect x="3.5" y="4.5" width="14" height="14" fill="#fff" stroke="#555"/>
 <rect x="3" y="4" width="15" height="3" fill="#2a3fd0"/>
 <rect x="5" y="8" width="5" height="3.5" fill="#d4202a"/><rect x="5" y="13" width="5" height="3.5" fill="#d4202a"/><rect x="11" y="9.5" width="5" height="5.5" fill="#d4202a"/>
</svg>
<!-- gantt icon -->
<svg class="abs" style="left:462px;top:407px" width="20" height="20" viewBox="0 0 20 20">
 <rect x="2" y="4" width="8" height="4" fill="#d01818"/><rect x="3" y="5.5" width="6" height="1" fill="#f8a0a0"/>
 <rect x="6" y="9" width="8" height="4" fill="#1878d0"/><rect x="7" y="10.5" width="6" height="1" fill="#a0d0f8"/>
 <rect x="11" y="14" width="7" height="4" fill="#3a9a10"/><rect x="12" y="15.5" width="5" height="1" fill="#c0f0a0"/>
</svg>
<!-- kanban icon -->
<svg class="abs" style="left:564px;top:407px" width="20" height="20" viewBox="0 0 20 20">
 <rect x="3.5" y="4.5" width="14" height="14" fill="#fff" stroke="#444" stroke-width="1.2"/>
 <rect x="5" y="6" width="3" height="3" fill="#f0a040"/><rect x="9" y="6" width="3" height="3" fill="#e83838"/><rect x="13" y="6" width="3" height="3" fill="#d840c8"/>
 <rect x="5" y="10" width="3" height="3" fill="#a0dc40"/><rect x="9" y="10" width="3" height="3" fill="#c8c8c8"/><rect x="13" y="10" width="3" height="3" fill="#a040e0"/>
 <rect x="5" y="14" width="3" height="3" fill="#30c040"/><rect x="9" y="14" width="3" height="3" fill="#40a8e8"/><rect x="13" y="14" width="3" height="3" fill="#2040e0"/>
</svg>
<!-- mind map icon -->
<svg class="abs" style="left:646px;top:407px" width="20" height="20" viewBox="0 0 20 20">
 <g stroke="#000" stroke-width="1"><path d="M3 4.5h3M3 6.5h3M3 8.5h3M3 10.5h3M3 12.5h3M3 14.5h3M3 16.5h3M3 18.5h3"/>
 <path d="M15 5.5h4M15 7.5h4M15 9.5h4M15 11.5h4M15 13.5h4M15 15.5h4M15 17.5h4"/></g>
 <path d="M6 4.5 C8 5 7.5 10 8 11 C7.5 13 8 18 6 18.5 M15 5.5 C13 6 13.5 10 13 11 C13.5 12 13 17 15 17.5" fill="none" stroke="#3020a0" stroke-width="1"/>
 <circle cx="10.8" cy="11" r="2.4" fill="#fff" stroke="#000" stroke-width="1.1"/>
</svg>
<div class="abs tt" style="left:30px">Task Tree</div>
<div class="abs tt" style="left:113px;letter-spacing:-0.25px">List View</div>
<div class="abs tt" style="left:201px;top:412px;font-weight:bold">Graphs</div>
<div class="abs tt" style="left:286px;letter-spacing:-0.25px">Calendar</div>
<div class="abs tt" style="left:375px;letter-spacing:-0.2px">Week Planner</div>
<div class="abs tt" style="left:487px">Gantt Chart</div>
<div class="abs tt" style="left:590px">Kanban</div>
<div class="abs" style="left:665px;top:409px;width:52px;height:18px;overflow:hidden"><div class="abs tt" style="left:7px;top:2px;letter-spacing:-0.4px">Mind Map</div></div>
<svg class="abs" style="left:0;top:405px" width="758" height="31">
 <g stroke="#3c3c3c" stroke-width="1.4" stroke-linecap="square">
  <path d="M164.5 13.5l5 4M169.5 13.5l-5 4"/>
  <path d="M253.5 15.5l5 4M258.5 15.5l-5 4"/>
  <path d="M340.5 13.5l5 4M345.5 13.5l-5 4"/>
  <path d="M452.5 13.5l5 4M457.5 13.5l-5 4"/>
  <path d="M555.5 13.5l5 4M560.5 13.5l-5 4"/>
  <path d="M637.5 13.5l5 4M642.5 13.5l-5 4"/>
 </g>
</svg>
<div class="abs sbtn" style="left:718px"></div>
<div class="abs sbtn" style="left:734px"></div>
<svg class="abs" style="left:718px;top:411px" width="32" height="16">
 <path d="M5.5 7.5L9.5 4.5v6z" fill="#000"/>
 <path d="M26 7.5L22 4.5v6z" fill="#000"/>
</svg>
<div id="bl" class="abs"></div><div id="br" class="abs"></div><div id="bb" class="abs"></div>
</body></html>
